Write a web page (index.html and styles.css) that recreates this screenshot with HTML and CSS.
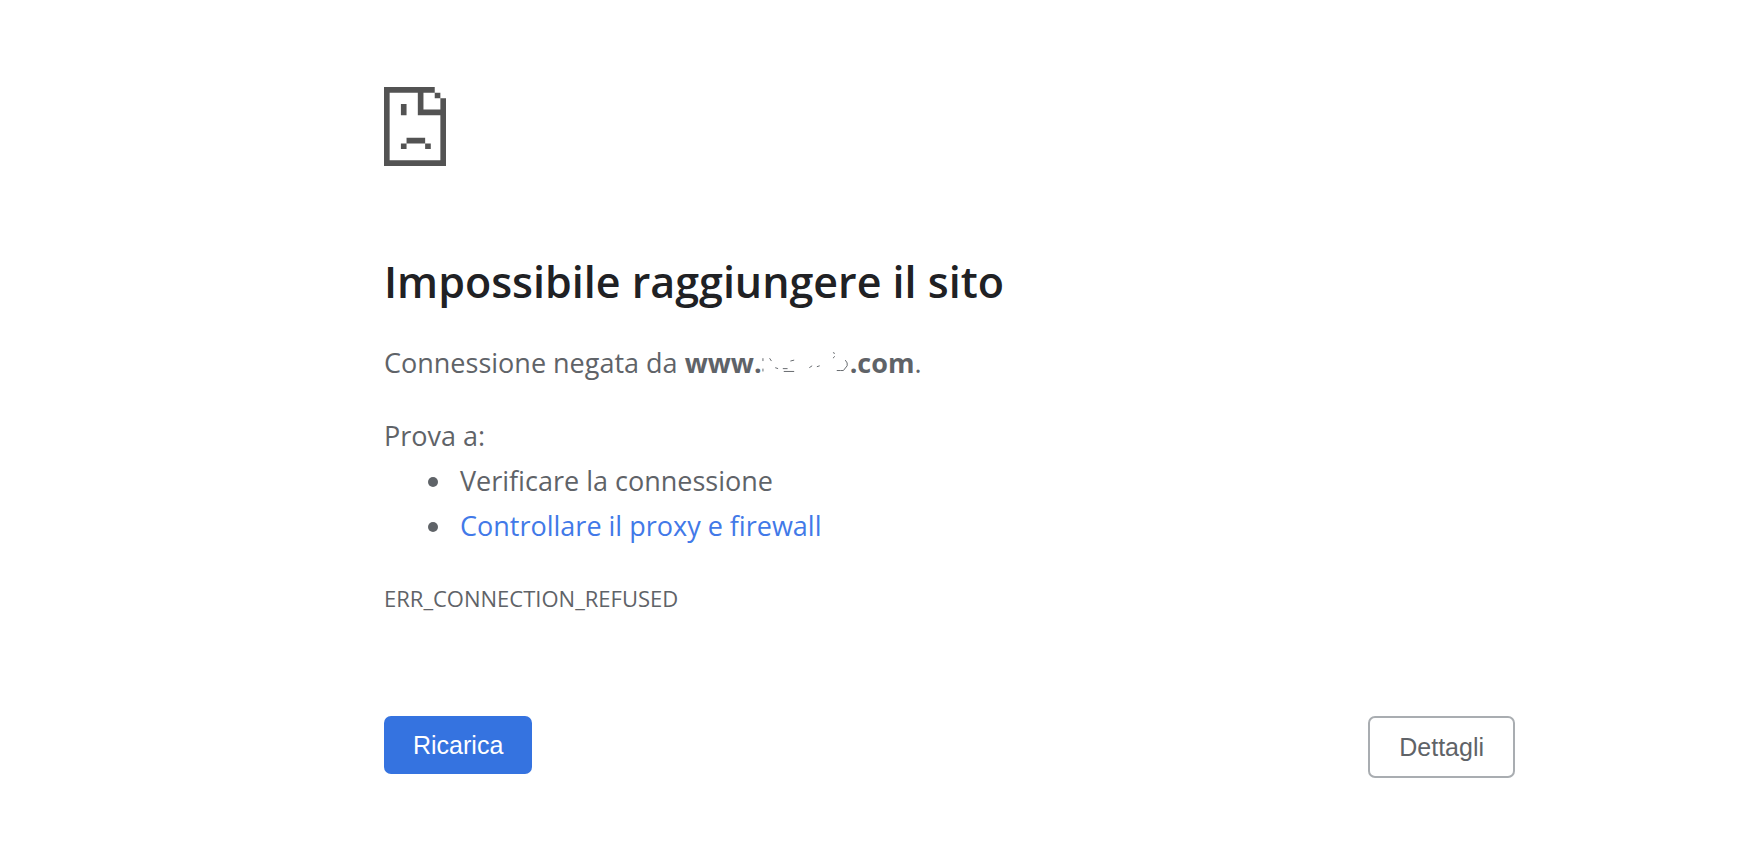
FILE: index.html
```
<!DOCTYPE html>
<html lang="it">

<head>
    <meta charset="UTF-8">
    <meta name="viewport" content="width=device-width, initial-scale=1.0">
    <title>Impossibile raggiungere il sito</title>
    <link rel="stylesheet" href="styles.css">
</head>

<body>

    <main class="errore">
        <svg class="icona" viewBox="0 0 110 140" aria-hidden="true">
            <path fill="#535353" d="M0 0H90V10H70V40H100V20H110V140H0ZM10 10V130H100V50H60V10ZM90 10H100V20H90ZM30 30H40V50H30ZM40 90H73V100H40ZM30 100H40V110H30ZM73 100H83V110H73Z" fill-rule="evenodd"/>
        </svg>

        <h1>Impossibile raggiungere il sito</h1>

        <p class="messaggio">Connessione negata da <strong>www.<svg class="nascosto" viewBox="0 0 93 24" aria-hidden="true">
            <path d="M1 8v3M1 19v3M8 8l2 3M14 18l3 1M22 19h5M23 22h11M30 11l4-1M50 18l3-2M58 17l3-1M75 2l2 1M75 8l2-2M79 21h4M88 10l2 3v3l-4 5h-3"/>
        </svg>.com</strong>.</p>

        <div class="suggerimenti">
            <p>Prova a:</p>
            <ul>
                <li>Verificare la connessione</li>
                <li><a href="#proxy">Controllare il proxy e firewall</a></li>
            </ul>
        </div>

        <p class="codice">ERR_CONNECTION_REFUSED</p>

        <div class="pulsanti">
            <button type="button" class="ricarica">Ricarica</button>
            <button type="button" class="dettagli">Dettagli</button>
        </div>
    </main>

</body>

</html>
```
FILE: styles.css
```
body {
    font-family: "Open Sans", "Noto Sans", sans-serif;
    font-size: 27px;
    line-height: 45px;
    margin: 0;
    background-color: #fff;
    color: #5f6368;
}

.errore {
    margin-left: 384px;
    margin-right: 239px;
    padding-top: 87px;
}

.icona {
    display: block;
    width: 62px;
    height: 79px;
}

h1 {
    margin: 88px 0 30px;
    font-size: 43px;
    font-weight: 600;
    line-height: 56px;
    color: #202124;
}

p {
    margin: 0;
}

.nascosto {
    width: 88px;
    height: 24px;
    vertical-align: -1px;
    fill: none;
    stroke: #5f6368;
    stroke-width: 1;
}

.suggerimenti {
    margin-top: 28px;
}

ul {
    margin: 0;
    padding-left: 70px;
}

li {
    padding-left: 6px;
}

a {
    color: #4279e8;
    text-decoration: none;
}

.codice {
    margin-top: 28px;
    font-size: 22px;
}

.pulsanti {
    display: flex;
    justify-content: space-between;
    align-items: flex-start;
    margin-top: 95px;
}

button {
    padding: 15px 29px;
    border: 0;
    border-radius: 7px;
    font-family: "Liberation Sans", Arial, sans-serif;
    font-size: 25px;
    line-height: 28px;
    cursor: pointer;
}

.ricarica {
    background-color: #3573e0;
    color: #fff;
}

.dettagli {
    border: 2px solid #a9adb1;
    background-color: #fff;
    color: #5f6368;
}
```
